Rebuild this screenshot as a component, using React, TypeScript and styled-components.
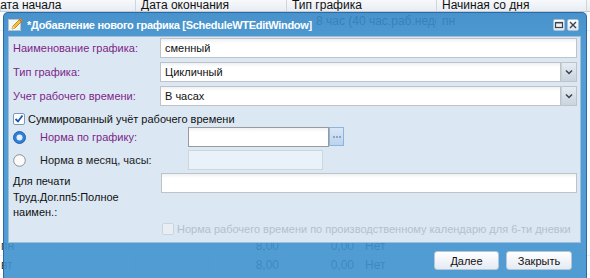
import styled, { createGlobalStyle } from "styled-components"

const GlobalStyle = createGlobalStyle`
  html, body {
    margin: 0;
    padding: 0;
    background: #fff;
    overflow: hidden;
  }
  body {
    font-family: "Liberation Sans", Arial, sans-serif;
    font-size: 11px;
  }
`

const Desktop = styled.div`
  position: relative;
  width: 590px;
  height: 278px;
  overflow: hidden;
  background: #fff;
`

/* ---------- grid behind the window ---------- */

const BackGrid = styled.div`
  display: flex;
  flex-direction: column;
`

const GridHeader = styled.div`
  display: flex;
  height: 11px;
  margin-left: -13px;
  background: linear-gradient(#f7f9fb, #e8edf3);
  border-bottom: 1px solid #c3cad3;
`

const GridRow = styled.div`
  display: flex;
  height: 19px;
  border-bottom: 1px solid #eef1f4;
  box-sizing: border-box;
`

const Cell = styled.div<{ $w: number; $pad?: number; $right?: boolean; $head?: boolean }>`
  flex: none;
  width: ${p => p.$w}px;
  box-sizing: border-box;
  padding: ${p => (p.$right ? `0 ${p.$pad ?? 4}px 0 0` : `0 0 0 ${p.$pad ?? 5}px`)};
  text-align: ${p => (p.$right ? "right" : "left")};
  border-right: 1px solid ${p => (p.$head ? "#cfd5dc" : "#e6eaef")};
  line-height: ${p => (p.$head ? "11px" : "19px")};
  font-size: 12px;
  color: ${p => (p.$head ? "#111" : "#333")};
  white-space: nowrap;
  overflow: hidden;
`

const GridGap = styled.div`
  height: 206px;
`

/* ---------- window ---------- */

const Win = styled.div`
  position: absolute;
  left: 3px;
  top: 12px;
  width: 584px;
  height: 280px;
  box-sizing: border-box;
  border: 1px solid rgba(38, 104, 165, 0.95);
  border-radius: 5px 5px 0 0;
  background: linear-gradient(rgba(52, 135, 198, 0.9) 0, rgba(62, 146, 206, 0.9) 40px);
  display: flex;
  flex-direction: column;
`

const TitleBar = styled.div`
  height: 23px;
  display: flex;
  align-items: center;
  padding: 0 7px 0 3px;
  flex: none;
`

const Title = styled.span`
  margin-left: 3px;
  color: #fff;
  font-weight: bold;
  font-size: 11px;
  letter-spacing: -0.3px;
  white-space: nowrap;
  flex: 1;
`

const Tools = styled.div`
  display: flex;
  gap: 2px;
  margin-top: 1px;
`

const ToolBtn = styled.div`
  width: 12px;
  height: 12px;
  box-sizing: border-box;
  border-radius: 2px;
  background: linear-gradient(#ffffff, #dfe7ef);
  border: 1px solid #a9c0d6;
  display: flex;
  align-items: center;
  justify-content: center;
`

const Body = styled.div`
  margin: 0 5px 0 4px;
  height: 207px;
  box-sizing: border-box;
  background: #dbe8f3;
  border: 1px solid #9fbedb;
  padding: 1px 3px 0 4px;
  display: flex;
  flex-direction: column;
  flex: none;
`

const FieldRow = styled.div<{ $label: number; $mb: number }>`
  display: grid;
  grid-template-columns: ${p => p.$label}px 1fr;
  align-items: center;
  height: 20px;
  margin-bottom: ${p => p.$mb}px;
`

const Label = styled.span<{ $tone?: "purple" | "dark" }>`
  color: ${p => (p.$tone === "purple" ? "#7e1f88" : "#1a1a1a")};
  font-size: 11px;
  white-space: nowrap;
`

const TextInput = styled.div<{ $focus?: boolean; $disabled?: boolean; $w?: number }>`
  height: 20px;
  box-sizing: border-box;
  width: ${p => (p.$w ? `${p.$w}px` : "100%")};
  border: 1px solid ${p => (p.$focus ? "#9a9a9a" : p.$disabled ? "#cdd6df" : "#bfc2c6")};
  background: ${p =>
    p.$disabled ? "#e9f1f9" : "linear-gradient(#eef0f2 0, #ffffff 4px, #ffffff 100%)"};
  padding: 0 4px;
  line-height: 18px;
  font-size: 11px;
  color: #111;
`

const Combo = styled.div`
  display: flex;
  height: 20px;
`

const Trigger = styled.div`
  width: 16px;
  flex: none;
  box-sizing: border-box;
  border: 1px solid #bfc2c6;
  border-left: 1px solid #c9d2db;
  background: linear-gradient(#e6ecf2, #c9d4df);
  display: flex;
  align-items: center;
  justify-content: center;
`

const DotsBtn = styled.div`
  width: 15px;
  height: 19px;
  box-sizing: border-box;
  border: 1px solid #8db3df;
  background: linear-gradient(#d9e7f6, #bcd3ee);
  display: flex;
  align-items: center;
  justify-content: center;
  gap: 1px;
`

const Dot = styled.span`
  width: 2px;
  height: 2px;
  background: #8aa6c6;
`

const CheckRow = styled.div<{ $indent: number; $mb: number }>`
  display: flex;
  align-items: center;
  gap: 3px;
  height: 14px;
  padding-left: ${p => p.$indent}px;
  margin-bottom: ${p => p.$mb}px;
`

const CheckText = styled.span<{ $disabled?: boolean }>`
  font-size: 11px;
  color: ${p => (p.$disabled ? "#b4c0cd" : "#111")};
  white-space: nowrap;
`

const RadioRow = styled.div<{ $mb: number }>`
  display: grid;
  grid-template-columns: 27px 148px auto;
  align-items: center;
  height: 20px;
  margin-bottom: ${p => p.$mb}px;
`

const InputWithBtn = styled.div`
  display: flex;
  align-items: flex-start;
`

const PrintRow = styled.div`
  display: grid;
  grid-template-columns: 148px 1fr;
  align-items: start;
  height: 46px;
  margin-bottom: 3px;
`

const MultiLabel = styled.div`
  font-size: 11px;
  line-height: 15.5px;
  color: #111;
  padding-top: 1px;
`

const Footer = styled.div`
  display: flex;
  justify-content: flex-end;
  gap: 7px;
  padding: 8px 14px 0 0;
`

const Button = styled.div<{ $w: number }>`
  width: ${p => p.$w}px;
  height: 19px;
  box-sizing: border-box;
  border: 1px solid #b7c6d6;
  border-radius: 3px;
  background: linear-gradient(#ffffff, #e4ebf3);
  display: flex;
  align-items: center;
  justify-content: center;
  font-size: 11px;
  color: #111;
`

/* ---------- drawings ---------- */

const EditIcon = () => (
  <svg width="17" height="15" viewBox="0 0 17 15">
    <rect x="1.5" y="2.5" width="12" height="11" fill="#f4f6f8" stroke="#b9c3cc" />
    <path d="M5 12 L6 9 L13.5 1.5 L15.5 3.5 L8 11 Z" fill="#f2c23a" stroke="#b07a14" strokeWidth="0.8" />
    <path d="M5 12 L6 9 L8 11 Z" fill="#f1d9a8" />
    <path d="M12.5 2.5 L14.5 4.5" stroke="#d35a3a" strokeWidth="1.4" />
  </svg>
)

const MaxIcon = () => (
  <svg width="10" height="10" viewBox="0 0 10 10">
    <rect x="1.5" y="2.5" width="7" height="5" fill="none" stroke="#3b4350" strokeWidth="1.2" />
    <rect x="1.5" y="2" width="7" height="1.4" fill="#3b4350" />
  </svg>
)

const CloseIcon = () => (
  <svg width="10" height="10" viewBox="0 0 10 10">
    <path d="M2 2 L8 8 M8 2 L2 8" stroke="#3b4350" strokeWidth="1.4" />
  </svg>
)

const ArrowDown = () => (
  <svg width="8" height="6" viewBox="0 0 8 6">
    <path d="M1 1.5 L4 4.5 L7 1.5" fill="none" stroke="#374352" strokeWidth="1.5" />
  </svg>
)

const CheckBox = ({ checked, disabled }: { checked?: boolean; disabled?: boolean }) => (
  <svg width="12" height="12" viewBox="0 0 12 12">
    <rect
      x="0.5"
      y="0.5"
      width="11"
      height="11"
      rx="1.5"
      fill={disabled ? "#e8eef4" : "#fff"}
      stroke={disabled ? "#c9d4de" : "#7f9ab6"}
    />
    {checked && <path d="M2.5 6 L5 8.5 L9.5 2.5" fill="none" stroke="#1756b5" strokeWidth="1.8" />}
  </svg>
)

const Radio = ({ checked }: { checked?: boolean }) => (
  <svg width="13" height="13" viewBox="0 0 13 13">
    {checked ? (
      <>
        <circle cx="6.5" cy="6.5" r="6" fill="#2f7fd9" stroke="#2463b0" />
        <circle cx="6.5" cy="6.5" r="3" fill="#e4f0fd" />
      </>
    ) : (
      <circle cx="6.5" cy="6.5" r="5.8" fill="#fbfbfb" stroke="#8c8f93" />
    )}
  </svg>
)

export default function App() {
  return (
    <>
      <GlobalStyle />
      <Desktop>
        <BackGrid>
          <GridHeader>
            <Cell $head $w={149}>Дата начала</Cell>
            <Cell $head $w={151}>Дата окончания</Cell>
            <Cell $head $w={150}>Тип графика</Cell>
            <Cell $head $w={150}>Начиная со дня</Cell>
          </GridHeader>
          <GridRow>
            <Cell $w={136} />
            <Cell $w={151} />
            <Cell $w={150} $pad={29}>8 час (40 час.раб.недел...</Cell>
            <Cell $w={150}>пн</Cell>
          </GridRow>
          <GridGap />
          <GridRow>
            <Cell $w={60} $pad={1}>пн</Cell>
            <Cell $w={75} />
            <Cell $w={75} />
            <Cell $w={75} $right $pad={5}>8,00</Cell>
            <Cell $w={73} $right $pad={3}>0,00</Cell>
            <Cell $w={100} $pad={7}>Нет</Cell>
          </GridRow>
          <GridRow>
            <Cell $w={60} $pad={1}>вт</Cell>
            <Cell $w={75} />
            <Cell $w={75} />
            <Cell $w={75} $right $pad={5}>8,00</Cell>
            <Cell $w={73} $right $pad={3}>0,00</Cell>
            <Cell $w={100} $pad={7}>Нет</Cell>
          </GridRow>
        </BackGrid>

        <Win>
          <TitleBar>
            <EditIcon />
            <Title>*Добавление нового графика [ScheduleWTEditWindow]</Title>
            <Tools>
              <ToolBtn>
                <MaxIcon />
              </ToolBtn>
              <ToolBtn>
                <CloseIcon />
              </ToolBtn>
            </Tools>
          </TitleBar>

          <Body>
            <FieldRow $label={147} $mb={4}>
              <Label $tone="purple">Наименование графика:</Label>
              <TextInput>сменный</TextInput>
            </FieldRow>
            <FieldRow $label={147} $mb={4}>
              <Label $tone="purple">Тип графика:</Label>
              <Combo>
                <TextInput>Цикличный</TextInput>
                <Trigger>
                  <ArrowDown />
                </Trigger>
              </Combo>
            </FieldRow>
            <FieldRow $label={147} $mb={6}>
              <Label $tone="purple">Учет рабочего времени:</Label>
              <Combo>
                <TextInput>В часах</TextInput>
                <Trigger>
                  <ArrowDown />
                </Trigger>
              </Combo>
            </FieldRow>

            <CheckRow $indent={0} $mb={1}>
              <CheckBox checked />
              <CheckText>Суммированный учёт рабочего времени</CheckText>
            </CheckRow>

            <RadioRow $mb={3}>
              <Radio checked />
              <Label $tone="purple">Норма по графику:</Label>
              <InputWithBtn>
                <TextInput $focus $w={141} />
                <DotsBtn>
                  <Dot />
                  <Dot />
                  <Dot />
                </DotsBtn>
              </InputWithBtn>
            </RadioRow>
            <RadioRow $mb={3}>
              <Radio />
              <Label>Норма в месяц, часы:</Label>
              <TextInput $disabled $w={135} />
            </RadioRow>

            <PrintRow>
              <MultiLabel>
                Для печати
                <br />
                Труд.Дог.пп5:Полное
                <br />
                наимен.:
              </MultiLabel>
              <TextInput />
            </PrintRow>

            <CheckRow $indent={149} $mb={0}>
              <CheckBox disabled />
              <CheckText $disabled>
                Норма рабочего времени по производственному календарю для 6-ти дневки
              </CheckText>
            </CheckRow>
          </Body>

          <Footer>
            <Button $w={65}>Далее</Button>
            <Button $w={66}>Закрыть</Button>
          </Footer>
        </Win>
      </Desktop>
    </>
  )
}
